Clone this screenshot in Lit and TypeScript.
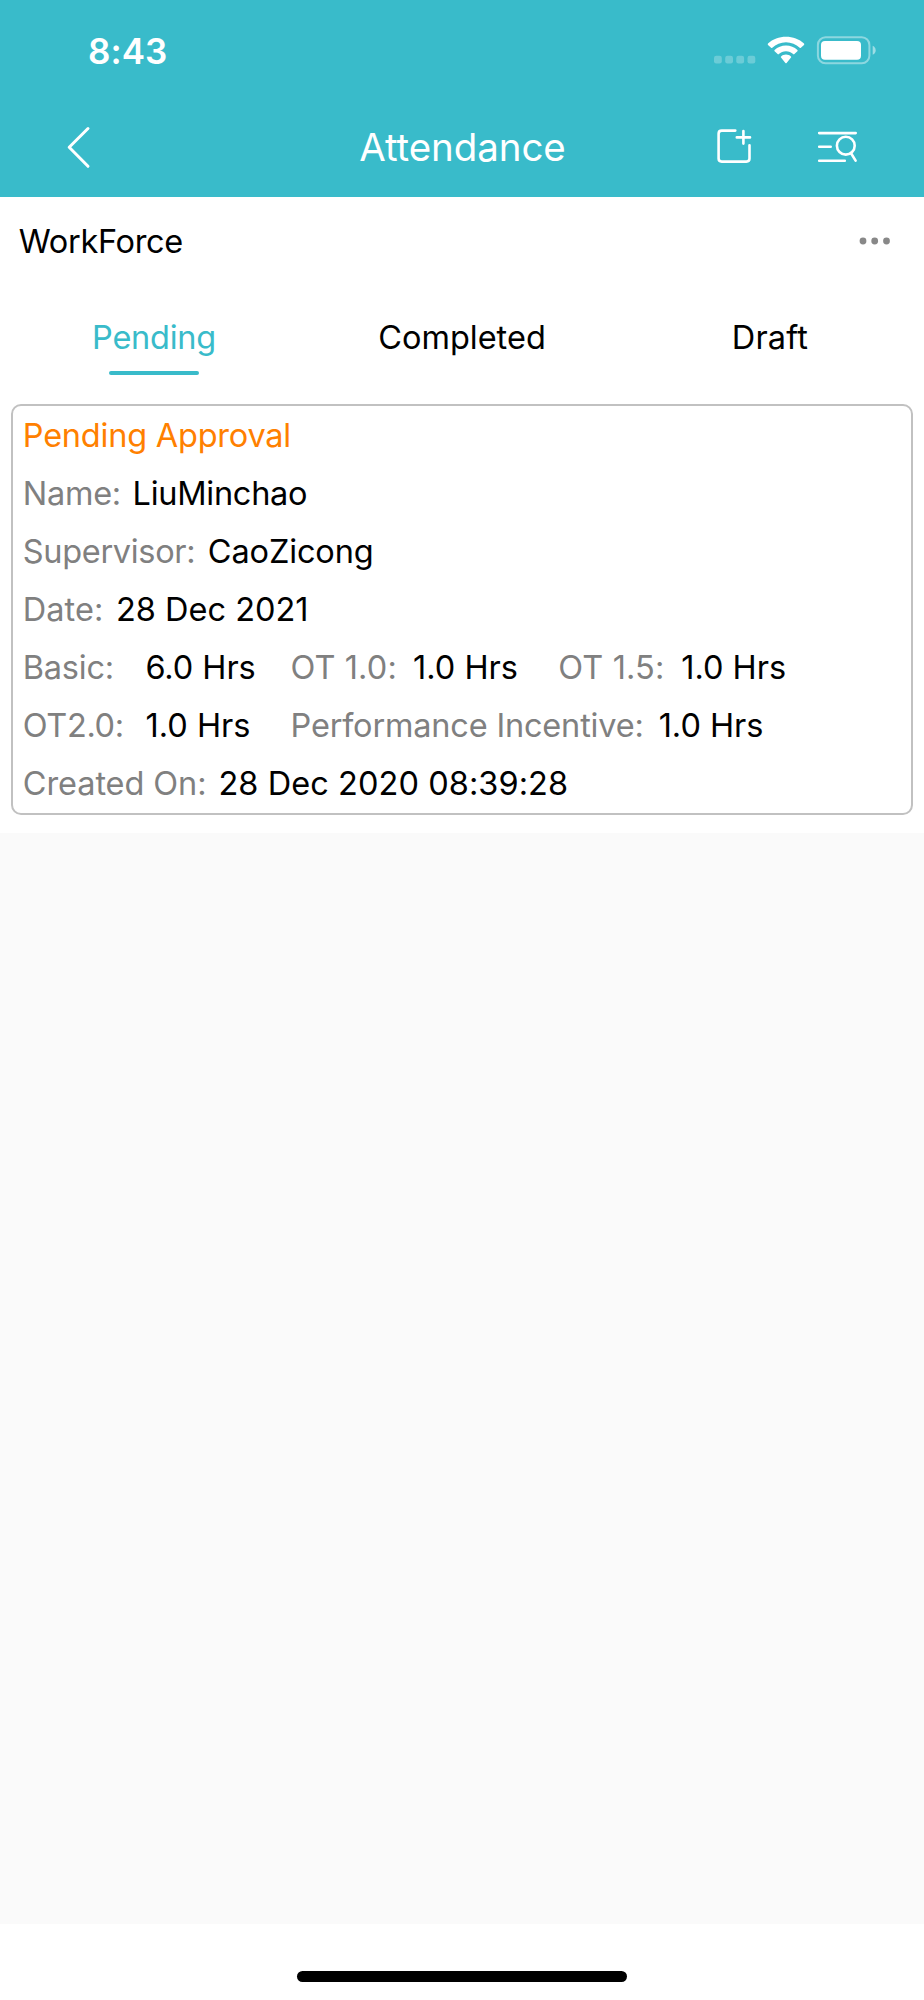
import { LitElement, html, css } from "lit";
import { customElement } from "lit/decorators.js";
import { styleMap } from "lit/directives/style-map.js";

interface Segment {
  text: string;
  kind: "label" | "value" | "status";
  slot?: number;
  track: number;
}

const seg = (kind: Segment["kind"], text: string, track: number, slot?: number): Segment => ({
  kind,
  text,
  track,
  slot,
});

const RECORD: Segment[][] = [
  [seg("status", "Pending Approval", -0.227)],
  [seg("label", "Name:", -0.288, 109.8), seg("value", "LiuMinchao", -0.27)],
  [seg("label", "Supervisor:", -0.32, 185), seg("value", "CaoZicong", -0.13)],
  [seg("label", "Date:", 0.05, 93.2), seg("value", "28 Dec 2021", 0)],
  [
    seg("label", "Basic:", -0.221, 122.6),
    seg("value", "6.0 Hrs", -0.08, 145),
    seg("label", "OT 1.0:", 0.123, 122.7),
    seg("value", "1.0 Hrs", -0.02, 145.2),
    seg("label", "OT 1.5:", 0.13, 123),
    seg("value", "1.0 Hrs", -0.02),
  ],
  [
    seg("label", "OT2.0:", -0.35, 122.8),
    seg("value", "1.0 Hrs", -0.02, 144.9),
    seg("label", "Performance Incentive:", -0.185, 368.2),
    seg("value", "1.0 Hrs", -0.02),
  ],
  [seg("label", "Created On:", -0.09, 195.7), seg("value", "28 Dec 2020 08:39:28", 0.06)],
];

@customElement("status-bar")
export class StatusBar extends LitElement {
  static styles = css`
    :host {
      display: flex;
      justify-content: space-between;
      height: 98px;
      padding: 0 48px 0 88px;
      box-sizing: border-box;
      color: #fff;
    }
    .time {
      font-size: 35px;
      font-weight: 600;
      line-height: 102px;
      letter-spacing: 0.04px;
    }
    .indicators {
      width: 164px;
      height: 98px;
    }
  `;
  render() {
    return html`
      <span class="time">8:43</span>
      <svg class="indicators" viewBox="712 0 164 98" fill="#fff">
        <g opacity="0.25">
          <rect x="714" y="55.7" width="7.8" height="7.8" rx="2.2" />
          <rect x="725.2" y="55.7" width="7.8" height="7.8" rx="2.2" />
          <rect x="736.3" y="55.7" width="7.8" height="7.8" rx="2.2" />
          <rect x="747.5" y="55.7" width="7.8" height="7.8" rx="2.2" />
        </g>
        <path d="M786 42.3C791.3 42.3 796.1 44.4 799.7 47.8Q800.3 48.4 800.9 47.8L804 44.9Q804.6 44.2 804 43.5C799.2 39.1 792.9 36.8 786 36.8S772.8 39.1 768 43.5Q767.4 44.2 768 44.9L771.1 47.8Q771.7 48.4 772.3 47.8C775.9 44.4 780.7 42.3 786 42.3Z" />
        <path d="M786 51.3C788.8 51.3 791.3 52.4 793.2 54.1Q793.8 54.7 794.4 54.1L797.4 51.2Q798 50.5 797.4 49.9C794.4 47.2 790.4 45.6 786 45.6S777.6 47.2 774.6 49.9Q774 50.5 774.6 51.2L777.6 54.1Q778.2 54.7 778.8 54.1C780.7 52.4 783.2 51.3 786 51.3Z" />
        <path d="M791 57.6Q791.6 57 790.9 56.4C789.6 55.3 787.9 54.6 786 54.6S782.4 55.3 781.1 56.4Q780.4 57 781 57.6L785.4 62.9Q786 63.5 786.6 62.9Z" />
        <rect x="817.9" y="37.3" width="51.5" height="26" rx="7.6" fill="none" stroke="#fff" stroke-width="2" opacity="0.42" />
        <rect x="821" y="41" width="40" height="18.8" rx="4" />
        <path d="M872.7 45.8C874.6 46.7 875.7 48.4 875.7 50.3S874.6 53.9 872.7 54.8Z" opacity="0.5" />
      </svg>
    `;
  }
}

@customElement("nav-bar")
export class NavBar extends LitElement {
  static styles = css`
    :host {
      display: grid;
      grid-template-columns: 1fr auto 1fr;
      height: 99px;
      color: #fff;
    }
    .icon {
      height: 99px;
      fill: none;
      stroke: #fff;
      stroke-linecap: round;
      stroke-linejoin: round;
    }
    .back {
      width: 60px;
      margin-left: 50px;
      stroke-width: 3;
    }
    .title {
      font-size: 38.5px;
      line-height: 99px;
      padding-left: 1px;
      letter-spacing: -0.08px;
    }
    .actions {
      justify-self: end;
      width: 160px;
      margin-right: 54px;
      stroke-width: 2.6;
    }
  `;
  render() {
    return html`
      <svg class="icon back" viewBox="50 98 60 99">
        <path d="M88 128.5L69.2 147.3L88 166.3" />
      </svg>
      <span class="title">Attendance</span>
      <svg class="icon actions" viewBox="710 98 160 99">
        <path d="M735.3 130.6H721.7Q718.6 130.6 718.6 133.7V158.5Q718.6 161.6 721.7 161.6H746.4Q749.5 161.6 749.5 158.5V145.3" />
        <path d="M736.8 137.4H750M743.4 131V143.6" />
        <path d="M819.2 133.1H855.7M819.2 146.7H830.7M819.2 160.7H844.8" />
        <circle cx="845.8" cy="145.7" r="8.9" />
        <path d="M851.2 153.5L855.6 160.6" />
      </svg>
    `;
  }
}

@customElement("tab-strip")
export class TabStrip extends LitElement {
  static styles = css`
    :host {
      display: grid;
      grid-template-columns: repeat(3, 308px);
      height: 114px;
    }
    .tab {
      display: flex;
      flex-direction: column;
      align-items: center;
      line-height: 60px;
      padding-top: 18px;
    }
    .pending {
      color: #39bbca;
      letter-spacing: -0.25px;
    }
    .draft {
      letter-spacing: 0.16px;
    }
    .underline {
      width: 90px;
      height: 4.6px;
      margin-top: 2.6px;
      border-radius: 2.3px;
      background: #39bbca;
    }
  `;
  render() {
    return html`
      <div class="tab pending">Pending<span class="underline"></span></div>
      <div class="tab">Completed</div>
      <div class="tab draft">Draft</div>
    `;
  }
}

@customElement("record-card")
export class RecordCard extends LitElement {
  static styles = css`
    :host {
      display: block;
      margin: 0 11px;
      padding: 1px 0 0 9.8px;
      height: 406px;
      border: 2px solid #c1c1c1;
      border-radius: 10px;
      box-sizing: content-box;
    }
    .row {
      display: flex;
      height: 58px;
      line-height: 58px;
      white-space: nowrap;
    }
    .row > span {
      flex: none;
    }
    .label {
      color: #808080;
    }
    .status {
      color: #ff8000;
    }
  `;
  render() {
    return RECORD.map(
      (row) => html`<div class="row">
        ${row.map(
          (s) => html`<span
            class=${s.kind}
            style=${styleMap({
              letterSpacing: `${s.track}px`,
              width: s.slot ? `${s.slot}px` : "auto",
            })}
            >${s.text}</span
          >`,
        )}
      </div>`,
    );
  }
}

@customElement("app-root")
export class AppRoot extends LitElement {
  static styles = css`
    :host {
      display: flex;
      flex-direction: column;
      height: 2000px;
      background: #fafafa;
      font-family: Inter, "Liberation Sans", sans-serif;
      font-size: 32.5px;
      color: #000;
    }
    .header {
      height: 197px;
      background: #39bbca;
    }
    .panel {
      height: 636px;
      background: #fff;
    }
    .group {
      display: flex;
      align-items: center;
      justify-content: space-between;
      height: 93px;
      padding: 0 33px 0 18.8px;
    }
    .name {
      line-height: 90px;
      height: 93px;
      letter-spacing: -0.32px;
    }
    .more {
      width: 32px;
      height: 8px;
      fill: #888;
      margin-bottom: 5px;
    }
    .empty {
      flex: 1;
    }
    .footer {
      display: flex;
      justify-content: center;
      height: 76px;
      background: #fff;
    }
    .home {
      width: 330px;
      height: 11px;
      margin-top: 46.7px;
      border-radius: 6px;
      background: #000;
    }
  `;
  render() {
    return html`
      <header class="header">
        <status-bar></status-bar>
        <nav-bar></nav-bar>
      </header>
      <main class="panel">
        <div class="group">
          <span class="name">WorkForce</span>
          <svg class="more" viewBox="859 237 32 8">
            <circle cx="863" cy="241" r="3.4" />
            <circle cx="874.7" cy="241" r="3.4" />
            <circle cx="886.5" cy="241" r="3.4" />
          </svg>
        </div>
        <tab-strip></tab-strip>
        <record-card></record-card>
      </main>
      <div class="empty"></div>
      <footer class="footer"><div class="home"></div></footer>
    `;
  }
}
